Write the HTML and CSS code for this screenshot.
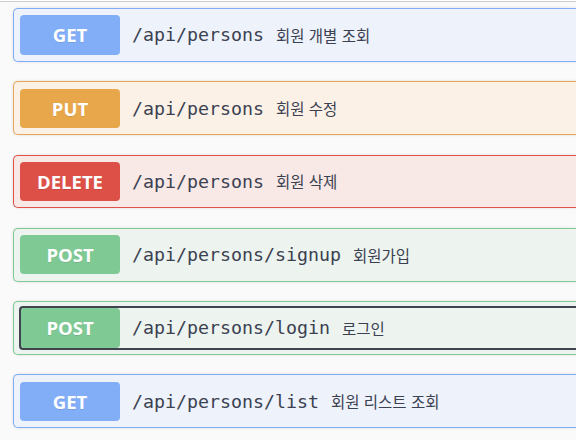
FILE: index.html
```html
<!DOCTYPE html>
<html lang="ko">
<head>
<meta charset="utf-8">
<title>persons API</title>
<link rel="stylesheet" href="styles.css">
</head>
<body>
<div class="topline"></div>
<div class="ops">
  <div class="opblock get">
    <div class="summary"><div class="control">
      <span class="method">GET</span>
      <span class="path">/api/persons</span>
      <span class="desc">회원 개별 조회</span>
    </div></div>
  </div>
  <div class="opblock put">
    <div class="summary"><div class="control">
      <span class="method">PUT</span>
      <span class="path">/api/persons</span>
      <span class="desc">회원 수정</span>
    </div></div>
  </div>
  <div class="opblock delete">
    <div class="summary"><div class="control">
      <span class="method">DELETE</span>
      <span class="path">/api/persons</span>
      <span class="desc">회원 삭제</span>
    </div></div>
  </div>
  <div class="opblock post">
    <div class="summary"><div class="control">
      <span class="method">POST</span>
      <span class="path">/api/persons/signup</span>
      <span class="desc">회원가입</span>
    </div></div>
  </div>
  <div class="opblock post">
    <div class="summary"><div class="control focused">
      <span class="method">POST</span>
      <span class="path">/api/persons/login</span>
      <span class="desc">로그인</span>
    </div></div>
  </div>
  <div class="opblock get">
    <div class="summary"><div class="control">
      <span class="method">GET</span>
      <span class="path">/api/persons/list</span>
      <span class="desc">회원 리스트 조회</span>
    </div></div>
  </div>
</div>
</body>
</html>
```
FILE: styles.css
```css
html, body {
  margin: 0;
  padding: 0;
  background: #fafafa;
}
.topline {
  height: 1px;
  border-top: 1px solid #ffffff;
  background: #cdcdcd;
}
.ops {
  padding: 6px 0 0 13px;
}
.opblock {
  border: 1px solid;
  border-right-width: 0;
  border-radius: 5px 0 0 5px;
  margin-bottom: 19.5px;
  box-shadow: 0 0 3px rgba(0, 0, 0, 0.12);
}
.summary {
  padding: 6.25px 0 6.25px 6px;
}
.control {
  position: relative;
  display: flex;
  align-items: center;
  height: 39.25px;
  white-space: nowrap;
}
.control.focused::after {
  content: "";
  position: absolute;
  left: -1.5px;
  top: -2px;
  right: 0;
  bottom: -2px;
  border: 2px solid #41444e;
  border-right: 0;
  border-radius: 4px 0 0 4px;
  pointer-events: none;
}
.method {
  flex: 0 0 100px;
  height: 100%;
  display: flex;
  align-items: center;
  justify-content: center;
  border-radius: 4px;
  color: #fff;
  font-family: "Open Sans", "Noto Sans", sans-serif;
  font-weight: 700;
  font-size: 18.5px;
  text-shadow: 0 1px 0 rgba(0, 0, 0, 0.1);
}
.path {
  margin-left: 12px;
  font-family: "DejaVu Sans Mono", monospace;
  font-size: 18.27px;
  color: #3b4151;
}
.desc {
  margin-left: 12px;
  font-family: "Noto Sans CJK KR", sans-serif;
  font-size: 15.5px;
  color: #3b4151;
}
.get { background: #edf2fb; border-color: #80acf6; }
.get .method { background: #82aef8; }
.put { background: #fbf1e7; border-color: #e6a656; }
.put .method { background: #e8a74b; }
.delete { background: #f8e8e6; border-color: #e0514a; }
.delete .method { background: #dd5048; }
.post { background: #edf3ef; border-color: #80ca96; }
.post .method { background: #7ec994; }
```
